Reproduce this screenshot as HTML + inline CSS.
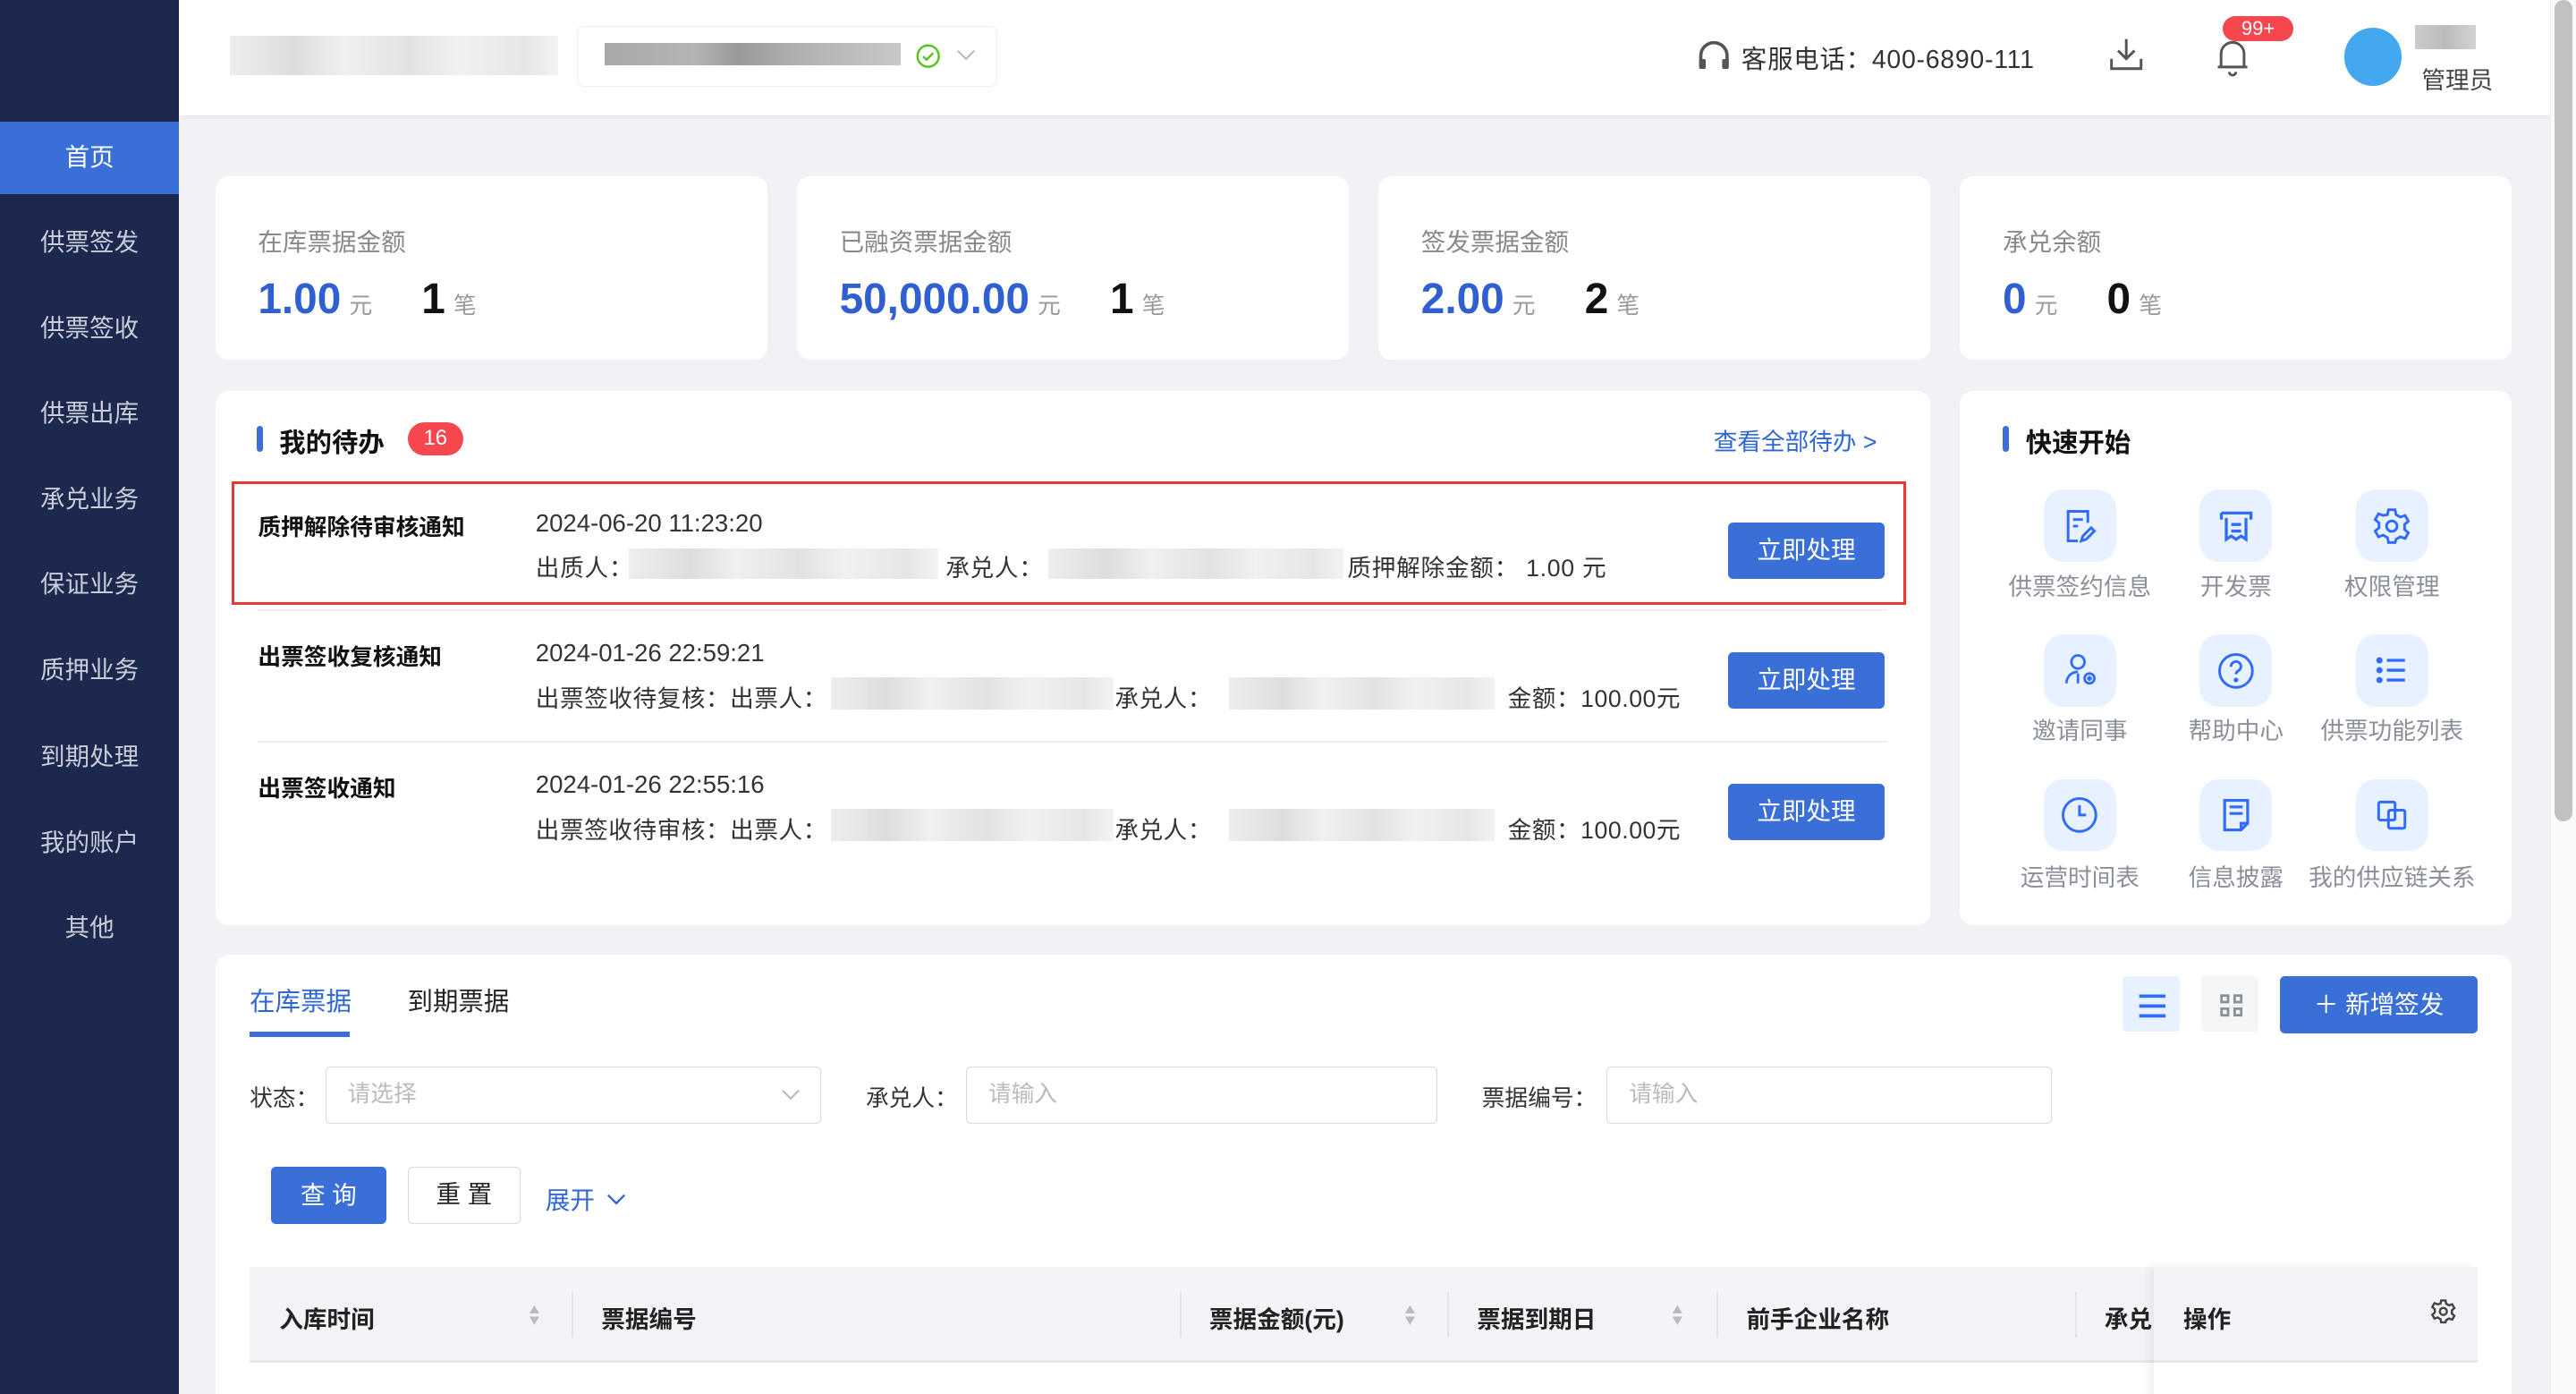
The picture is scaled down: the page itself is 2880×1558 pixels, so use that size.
<!DOCTYPE html>
<html><head><meta charset="utf-8">
<style>
*{margin:0;padding:0;box-sizing:border-box}
html,body{width:2880px;height:1558px;overflow:hidden;background:#f0f2f5}
#root{zoom:1.83673;width:1568px;height:848px;position:relative;background:#f0f2f5;font-family:"Liberation Sans","Noto Sans CJK SC",sans-serif;color:#333;overflow:hidden}
.abs{position:absolute}
.side{left:0;top:0;width:109px;height:848px;background:#1c284e}
.side div{position:absolute;left:0;width:109px;height:44px;line-height:44px;text-align:center;color:#c9cdd8;font-size:15px}
.side .act{background:#3b6fd8;color:#fff}
.hdr{left:109px;top:0;width:1443px;height:70px;background:#fff;box-shadow:0 1px 4px rgba(0,0,0,.06)}
.card{position:absolute;background:#fff;border-radius:8px}
.lbl{position:absolute;font-size:15px;color:#888}
.val{position:absolute;font-size:26px;font-weight:bold;color:#2f5fd0;white-space:nowrap}
.val small{font-size:14px;color:#999;font-weight:normal;margin-left:5px}
.val b{color:#111;margin-left:30px}
.blur{position:absolute;background:linear-gradient(90deg,#eee,#ddd 20%,#f0f0f0 35%,#e2e2e2 55%,#f1f1f1 70%,#e6e6e6 90%,#f3f3f3)}
.t{position:absolute;white-space:nowrap;font-size:14px}
.btn{position:absolute;background:#3b6fd8;color:#fff;font-size:15px;text-align:center;border-radius:3px}
.qi{position:absolute;width:44px;height:44px;border-radius:12px;background:#e8f1ff;display:flex;align-items:center;justify-content:center}
.ql{position:absolute;width:120px;text-align:center;font-size:14.5px;color:#8a8f99}
.inp{position:absolute;height:35px;border:1px solid #d9d9d9;border-radius:3px;font-size:14px;color:#bbb;line-height:33px;padding-left:13px}
.th{position:absolute;top:791px;font-size:14.5px;font-weight:bold;color:#222}
.dv{position:absolute;top:786px;width:1px;height:28px;background:#e4e6ea}
.sort{position:absolute;top:792px;width:8px;height:16px}
</style></head><body><div id="root">
<div class="abs side">
<div class="act" style="top:74px">首页</div>
<div style="top:126px">供票签发</div>
<div style="top:178px">供票签收</div>
<div style="top:230px">供票出库</div>
<div style="top:282px">承兑业务</div>
<div style="top:334px">保证业务</div>
<div style="top:386px">质押业务</div>
<div style="top:439px">到期处理</div>
<div style="top:491px">我的账户</div>
<div style="top:543px">其他</div>
</div>
<div class="abs hdr"></div>
<div class="blur" style="left:140px;top:22px;width:200px;height:24px"></div>
<div class="abs" style="left:351px;top:16px;width:256px;height:37px;border:1px solid #eee;border-radius:4px;background:#fff"></div>
<div class="blur" style="left:368px;top:26px;width:180px;height:14px;background:linear-gradient(90deg,#a8a8a8,#b5b5b5 30%,#999 45%,#b0b0b0 65%,#c8c8c8)"></div>
<svg class="abs" style="left:557px;top:26px" width="16" height="16" viewBox="0 0 16 16"><circle cx="8" cy="8" r="6.5" fill="none" stroke="#52c41a" stroke-width="1.3"/><path d="M5 8.2l2 2 4-4" fill="none" stroke="#52c41a" stroke-width="1.3"/></svg>
<svg class="abs" style="left:582px;top:29px" width="12" height="10" viewBox="0 0 12 10"><path d="M1 2l5 5 5-5" fill="none" stroke="#bbb" stroke-width="1.2"/></svg>
<svg class="abs" style="left:1032px;top:24px" width="22" height="20" viewBox="0 0 22 20"><path d="M3 16V10a8 8 0 0116 0v6" fill="none" stroke="#555" stroke-width="2"/><rect x="2" y="12" width="4" height="6" rx="1" fill="#555"/><rect x="16" y="12" width="4" height="6" rx="1" fill="#555"/></svg>
<div class="t" style="left:1060px;top:24px;font-size:15.5px;letter-spacing:.4px;color:#333">客服电话：400-6890-111</div>
<svg class="abs" style="left:1283px;top:22px" width="22" height="22" viewBox="0 0 22 22"><path d="M11 2v12M6 9l5 5 5-5M2 14v6h18v-6" fill="none" stroke="#555" stroke-width="1.6"/></svg>
<svg class="abs" style="left:1347px;top:22px" width="24" height="26" viewBox="0 0 24 26"><path d="M5 19V11a7 7 0 0114 0v8M3 19h18M10 22a2 2 0 004 0" fill="none" stroke="#555" stroke-width="1.6"/></svg>
<div class="abs" style="left:1353px;top:10px;width:43px;height:15px;border-radius:8px;background:#f5474d;color:#fff;font-size:12px;text-align:center;line-height:15px">99+</div>
<div class="abs" style="left:1427px;top:17px;width:35px;height:35px;border-radius:50%;background:#44a8f0"></div>
<div class="blur" style="left:1470px;top:15px;width:37px;height:15px;background:linear-gradient(90deg,#ccc,#bbb 50%,#d3d3d3)"></div>
<div class="t" style="left:1474px;top:37px;color:#444;font-size:14.5px">管理员</div>
<div class="abs" style="left:1552px;top:0;width:16px;height:848px;background:#fafafa;border-left:1px solid #eee"></div>
<div class="abs" style="left:1555px;top:0;width:11px;height:500px;background:#c1c1c1;border-radius:6px"></div>

<div class="card" style="left:131px;top:107px;width:336px;height:112px"></div>
<div class="card" style="left:485px;top:107px;width:336px;height:112px"></div>
<div class="card" style="left:839px;top:107px;width:336px;height:112px"></div>
<div class="card" style="left:1193px;top:107px;width:336px;height:112px"></div>
<div class="lbl" style="left:157px;top:135px">在库票据金额</div>
<div class="lbl" style="left:511px;top:135px">已融资票据金额</div>
<div class="lbl" style="left:865px;top:135px">签发票据金额</div>
<div class="lbl" style="left:1219px;top:135px">承兑余额</div>
<div class="val" style="left:157px;top:167px">1.00<small>元</small><b>1</b><small>笔</small></div>
<div class="val" style="left:511px;top:167px">50,000.00<small>元</small><b>1</b><small>笔</small></div>
<div class="val" style="left:865px;top:167px">2.00<small>元</small><b>2</b><small>笔</small></div>
<div class="val" style="left:1219px;top:167px">0<small>元</small><b>0</b><small>笔</small></div>

<div class="card" style="left:131px;top:238px;width:1044px;height:325px"></div>
<div class="abs" style="left:156px;top:259px;width:4px;height:16px;background:#3b6fd8;border-radius:2px"></div>
<div class="t" style="left:170px;top:257px;font-size:16px;font-weight:bold;color:#111">我的待办</div>
<div class="abs" style="left:248px;top:257px;width:34px;height:20px;border-radius:10px;background:#f5474d;color:#fff;font-size:13px;text-align:center;line-height:20px">16</div>
<div class="t" style="left:1043px;top:257px;color:#2f66d6;font-size:14.5px">查看全部待办 &gt;</div>
<div class="abs" style="left:141px;top:293px;width:1019px;height:75px;border:2px solid #e53935"></div>
<div class="t" style="left:157px;top:310px;font-weight:bold;color:#111">质押解除待审核通知</div>
<div class="t" style="left:326px;top:310px;font-size:15px">2024-06-20 11:23:20</div>
<div class="t" style="left:326px;top:334px;font-size:14.5px;letter-spacing:.4px">出质人：<span style="display:inline-block;width:190px"></span>承兑人：<span style="display:inline-block;width:185px"></span>质押解除金额：&nbsp;1.00 元</div>
<div class="blur" style="left:383px;top:334px;width:188px;height:18px"></div>
<div class="blur" style="left:638px;top:334px;width:180px;height:18px"></div>
<div class="btn" style="left:1052px;top:318px;width:95px;height:34px;line-height:34px">立即处理</div>
<div class="abs" style="left:157px;top:371px;width:992px;height:1px;background:#eee"></div>
<div class="t" style="left:157px;top:389px;font-weight:bold;color:#111">出票签收复核通知</div>
<div class="t" style="left:326px;top:389px;font-size:15px">2024-01-26 22:59:21</div>
<div class="t" style="left:326px;top:413px;font-size:14.5px;letter-spacing:.3px">出票签收待复核：出票人：<span style="display:inline-block;width:175px"></span>承兑人：<span style="display:inline-block;width:180px"></span>金额：100.00元</div>
<div class="blur" style="left:506px;top:412px;width:172px;height:20px"></div>
<div class="blur" style="left:748px;top:412px;width:162px;height:20px"></div>
<div class="btn" style="left:1052px;top:397px;width:95px;height:34px;line-height:34px">立即处理</div>
<div class="abs" style="left:157px;top:451px;width:992px;height:1px;background:#eee"></div>
<div class="t" style="left:157px;top:469px;font-weight:bold;color:#111">出票签收通知</div>
<div class="t" style="left:326px;top:469px;font-size:15px">2024-01-26 22:55:16</div>
<div class="t" style="left:326px;top:493px;font-size:14.5px;letter-spacing:.3px">出票签收待审核：出票人：<span style="display:inline-block;width:175px"></span>承兑人：<span style="display:inline-block;width:180px"></span>金额：100.00元</div>
<div class="blur" style="left:506px;top:492px;width:172px;height:20px"></div>
<div class="blur" style="left:748px;top:492px;width:162px;height:20px"></div>
<div class="btn" style="left:1052px;top:477px;width:95px;height:34px;line-height:34px">立即处理</div>

<div class="card" style="left:1193px;top:238px;width:336px;height:325px"></div>
<div class="abs" style="left:1219px;top:259px;width:4px;height:16px;background:#3b6fd8;border-radius:2px"></div>
<div class="t" style="left:1233px;top:257px;font-size:16px;font-weight:bold;color:#111">快速开始</div>
<div class="qi" style="left:1244px;top:298px"><svg width="24" height="24" viewBox="0 0 24 24" fill="none" stroke="#2f6bff" stroke-width="1.6"><path d="M17 10V3H5v18h6M8 8h6M8 12h3"/><path d="M13 21l1-3 5-5 2 2-5 5z"/></svg></div>
<div class="qi" style="left:1339px;top:298px"><svg width="24" height="24" viewBox="0 0 24 24" fill="none" stroke="#2f6bff" stroke-width="1.8"><path d="M3 4h18v4M3 4v4M6 7v13l3-2 3 2 3-2 3 2V7M9 11h6M9 15h6"/></svg></div>
<div class="qi" style="left:1434px;top:298px"><svg width="24" height="24" viewBox="0 0 24 24" fill="none" stroke="#2f6bff" stroke-width="1.6"><path d="M10 2h4l.6 3 2.6 1.5 2.9-1 2 3.5-2.3 2v3l2.3 2-2 3.5-2.9-1-2.6 1.5L14 22h-4l-.6-3-2.6-1.5-2.9 1-2-3.5 2.3-2v-3L1.9 8l2-3.5 2.9 1L9.4 5z"/><circle cx="12" cy="12" r="3.2"/></svg></div>
<div class="qi" style="left:1244px;top:386px"><svg width="24" height="24" viewBox="0 0 24 24" fill="none" stroke="#2f6bff" stroke-width="1.5"><circle cx="11" cy="7" r="4"/><path d="M4 20c0-4 3-7 7-7M11 14v6"/><circle cx="18" cy="17" r="3"/><path d="M18 15.5v3M16.5 17h3"/></svg></div>
<div class="qi" style="left:1339px;top:386px"><svg width="26" height="26" viewBox="0 0 26 26" fill="none" stroke="#2f6bff" stroke-width="1.6"><circle cx="13" cy="13" r="10"/><path d="M10 10.5a3 3 0 115 2c-1 .7-2 1.2-2 2.5"/><circle cx="13" cy="18.5" r=".6" fill="#2f6bff"/></svg></div>
<div class="qi" style="left:1434px;top:386px"><svg width="24" height="24" viewBox="0 0 24 24" fill="none" stroke="#2f6bff" stroke-width="1.8"><path d="M9 6h11M9 12h11M9 18h11"/><circle cx="4.5" cy="6" r="1" fill="#2f6bff"/><circle cx="4.5" cy="12" r="1" fill="#2f6bff"/><circle cx="4.5" cy="18" r="1" fill="#2f6bff"/></svg></div>
<div class="qi" style="left:1244px;top:474px"><svg width="26" height="26" viewBox="0 0 26 26" fill="none" stroke="#2f6bff" stroke-width="1.6"><circle cx="13" cy="13" r="10"/><path d="M13 7v6h4"/></svg></div>
<div class="qi" style="left:1339px;top:474px"><svg width="24" height="24" viewBox="0 0 24 24" fill="none" stroke="#2f6bff" stroke-width="1.7"><path d="M5 3h14v14l-4 4H5zM8 7h8M8 11h8M15 21v-4h4"/></svg></div>
<div class="qi" style="left:1434px;top:474px"><svg width="24" height="24" viewBox="0 0 24 24" fill="none" stroke="#2f6bff" stroke-width="1.6"><rect x="4" y="4" width="10" height="11" rx="1"/><rect x="10" y="9" width="10" height="11" rx="1"/></svg></div>
<div class="ql" style="left:1206px;top:345px">供票签约信息</div>
<div class="ql" style="left:1301px;top:345px">开发票</div>
<div class="ql" style="left:1396px;top:345px">权限管理</div>
<div class="ql" style="left:1206px;top:433px">邀请同事</div>
<div class="ql" style="left:1301px;top:433px">帮助中心</div>
<div class="ql" style="left:1396px;top:433px">供票功能列表</div>
<div class="ql" style="left:1206px;top:522px">运营时间表</div>
<div class="ql" style="left:1301px;top:522px">信息披露</div>
<div class="ql" style="left:1396px;top:522px">我的供应链关系</div>

<div class="card" style="left:131px;top:581px;width:1398px;height:290px"></div>
<div class="t" style="left:152px;top:597px;font-size:15.5px;color:#2f66d6">在库票据</div>
<div class="abs" style="left:152px;top:628px;width:61px;height:3px;background:#3b6fd8"></div>
<div class="t" style="left:248px;top:597px;font-size:15.5px;color:#222">到期票据</div>
<div class="abs" style="left:1292px;top:594px;width:35px;height:34px;background:#e8f1ff;border-radius:2px"></div>
<svg class="abs" style="left:1300px;top:602px" width="20" height="20" viewBox="0 0 20 20"><path d="M2 4h16M2 10h16M2 16h16" stroke="#2f6bff" stroke-width="2"/></svg>
<div class="abs" style="left:1340px;top:594px;width:35px;height:34px;background:#f5f6f8;border-radius:2px"></div>
<svg class="abs" style="left:1350px;top:604px" width="16" height="16" viewBox="0 0 16 16" fill="none" stroke="#8a8f99" stroke-width="1.5"><rect x="2" y="2" width="4" height="4"/><rect x="10" y="2" width="4" height="4"/><rect x="2" y="10" width="4" height="4"/><rect x="10" y="10" width="4" height="4"/></svg>
<div class="btn" style="left:1388px;top:594px;width:120px;height:35px;line-height:35px">＋ 新增签发</div>
<div class="t" style="left:152px;top:657px;color:#333">状态：</div>
<div class="inp" style="left:198px;top:649px;width:302px">请选择<svg class="abs" style="right:12px;top:12px" width="12" height="10" viewBox="0 0 12 10"><path d="M1 2l5 5 5-5" fill="none" stroke="#bbb" stroke-width="1.2"/></svg></div>
<div class="t" style="left:527px;top:657px;color:#333">承兑人：</div>
<div class="inp" style="left:588px;top:649px;width:287px">请输入</div>
<div class="t" style="left:902px;top:657px;color:#333">票据编号：</div>
<div class="inp" style="left:978px;top:649px;width:271px">请输入</div>
<div class="btn" style="left:165px;top:710px;width:70px;height:35px;line-height:35px">查 询</div>
<div class="abs" style="left:248px;top:710px;width:69px;height:35px;line-height:33px;border:1px solid #d9d9d9;border-radius:3px;text-align:center;font-size:15px;color:#222">重 置</div>
<div class="t" style="left:332px;top:718px;font-size:15px;color:#2f66d6">展开 <svg width="12" height="10" viewBox="0 0 12 10" style="margin-left:3px"><path d="M1 2l5 5 5-5" fill="none" stroke="#2f66d6" stroke-width="1.3"/></svg></div>
<div class="abs" style="left:152px;top:771px;width:1356px;height:58px;background:#f3f4f7;border-bottom:2px solid #e6e7eb"></div>
<div class="th" style="left:170px">入库时间</div>
<div class="th" style="left:366px">票据编号</div>
<div class="th" style="left:736px">票据金额(元)</div>
<div class="th" style="left:899px">票据到期日</div>
<div class="th" style="left:1063px">前手企业名称</div>
<div class="th" style="left:1281px">承兑</div>
<div class="dv" style="left:348px"></div><div class="dv" style="left:718px"></div><div class="dv" style="left:881px"></div><div class="dv" style="left:1045px"></div><div class="dv" style="left:1263px"></div>
<svg class="sort" style="left:321px" viewBox="0 0 8 16"><path d="M4 2l3 5H1zM4 14l3-5H1z" fill="#bbb"/></svg>
<svg class="sort" style="left:854px" viewBox="0 0 8 16"><path d="M4 2l3 5H1zM4 14l3-5H1z" fill="#bbb"/></svg>
<svg class="sort" style="left:1017px" viewBox="0 0 8 16"><path d="M4 2l3 5H1zM4 14l3-5H1z" fill="#bbb"/></svg>
<div class="abs" style="left:1311px;top:771px;width:197px;height:80px;background:#fff;box-shadow:-3px 0 5px rgba(0,0,0,.06)"></div>
<div class="abs" style="left:1311px;top:771px;width:197px;height:58px;background:#f3f4f7;border-bottom:2px solid #e6e7eb"></div>
<div class="th" style="left:1329px">操作</div>
<svg class="abs" style="left:1479px;top:790px" width="16" height="16" viewBox="0 0 24 24" fill="none" stroke="#444" stroke-width="2"><path d="M10 2h4l.6 3 2.6 1.5 2.9-1 2 3.5-2.3 2v3l2.3 2-2 3.5-2.9-1-2.6 1.5L14 22h-4l-.6-3-2.6-1.5-2.9 1-2-3.5 2.3-2v-3L1.9 8l2-3.5 2.9 1L9.4 5z"/><circle cx="12" cy="12" r="3.2"/></svg>
</div></body></html>
